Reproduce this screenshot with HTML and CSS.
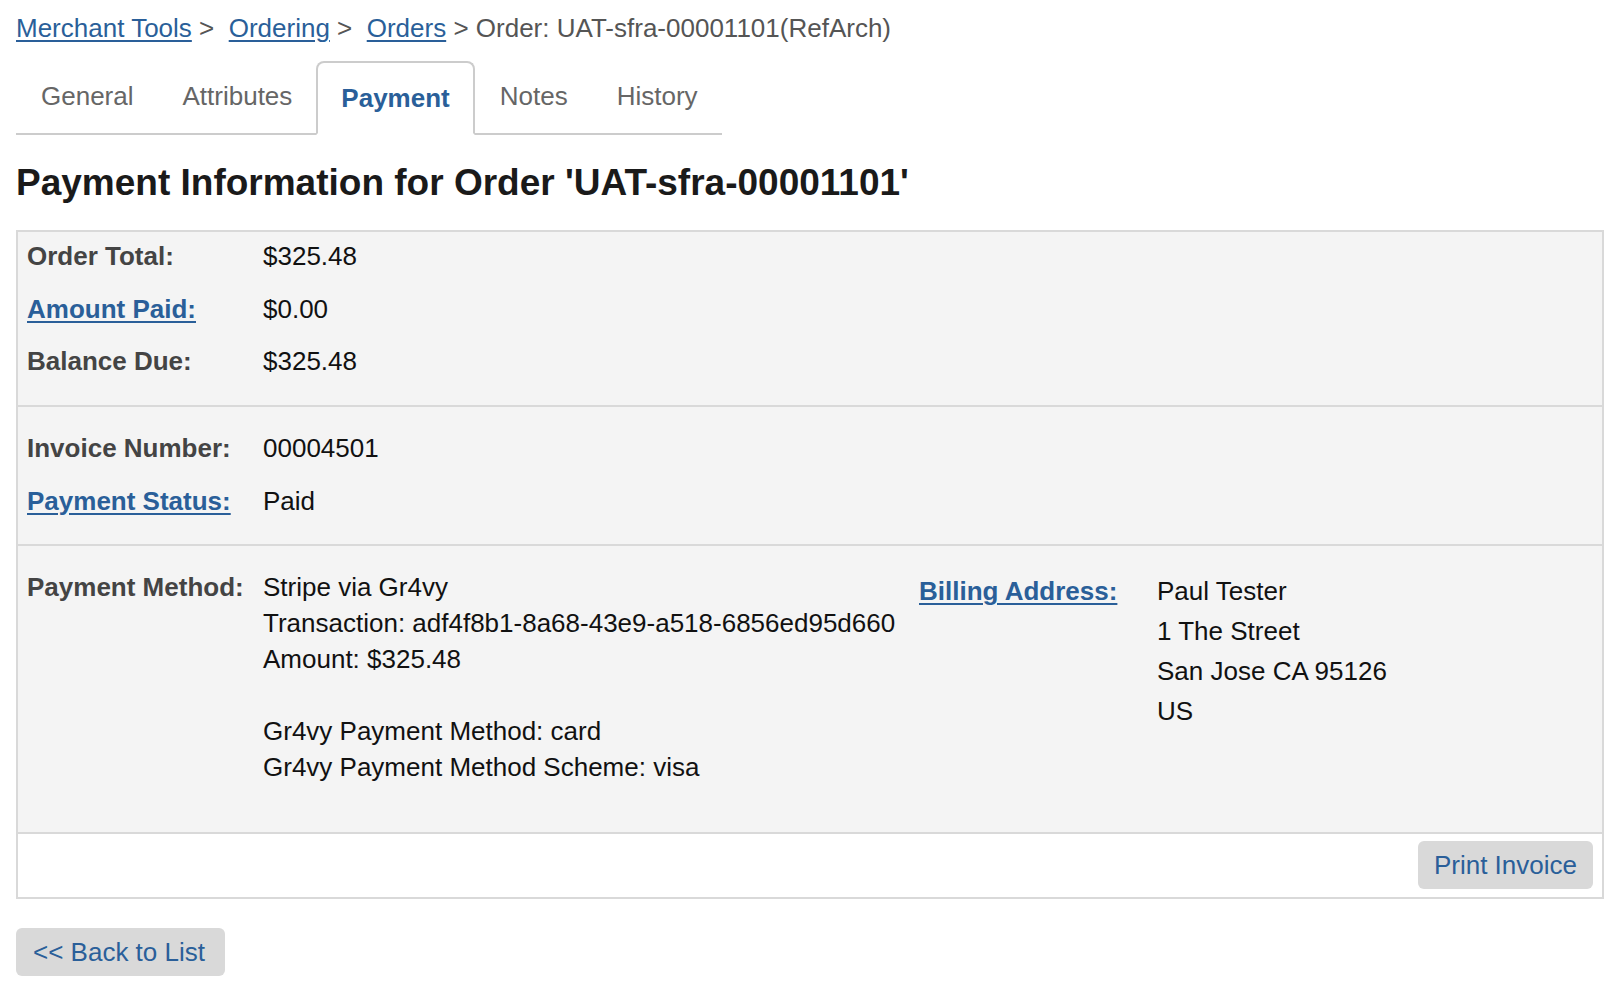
FILE: index.html
```html
<!DOCTYPE html>
<html lang="en">
<head>
<meta charset="utf-8">
<title>Payment Information</title>
<link rel="stylesheet" href="styles.css">
</head>
<body>
<div class="page">
  <nav class="crumbs"><a href="#">Merchant Tools</a> &gt;&nbsp; <a href="#">Ordering</a> &gt;&nbsp; <a href="#">Orders</a> &gt; Order: UAT-sfra-00001101(RefArch)</nav>

  <div class="tabs">
    <div class="tab">General</div>
    <div class="tab">Attributes</div>
    <div class="tab active">Payment</div>
    <div class="tab">Notes</div>
    <div class="tab">History</div>
  </div>

  <h1 class="title">Payment Information for Order 'UAT-sfra-00001101'</h1>

  <div class="panel">
    <div class="sec sec1">
      <div class="row"><span class="label">Order Total:</span><span>$325.48</span></div>
      <div class="row"><a href="#" class="label link">Amount Paid:</a><span>$0.00</span></div>
      <div class="row"><span class="label">Balance Due:</span><span>$325.48</span></div>
    </div>
    <div class="sec sec2">
      <div class="row"><span class="label">Invoice Number:</span><span>00004501</span></div>
      <div class="row"><a href="#" class="label link">Payment Status:</a><span>Paid</span></div>
    </div>
    <div class="sec sec3">
      <div class="label lines">Payment Method:</div>
      <div class="lines">
        <div>Stripe via Gr4vy</div>
        <div>Transaction: adf4f8b1-8a68-43e9-a518-6856ed95d660</div>
        <div>Amount: $325.48</div>
        <div class="blank"></div>
        <div>Gr4vy Payment Method: card</div>
        <div>Gr4vy Payment Method Scheme: visa</div>
      </div>
      <div class="addr"><a href="#" class="label link">Billing Address:</a></div>
      <div class="addr">
        <div>Paul Tester</div>
        <div>1 The Street</div>
        <div>San Jose CA 95126</div>
        <div>US</div>
      </div>
    </div>
    <div class="foot">
      <span class="btn">Print Invoice</span>
    </div>
  </div>

  <div class="back-wrap"><span class="btn back">&lt;&lt; Back to List</span></div>
</div>
</body>
</html>
```

FILE: styles.css
```css
html, body {
  margin: 0;
  padding: 0;
  background: #ffffff;
}

body {
  font-family: "Liberation Sans", Arial, Helvetica, sans-serif;
  font-size: 26px;
  color: #111111;
}

a {
  color: #2a5f99;
  text-decoration: underline;
  text-underline-offset: 3px;
  text-decoration-thickness: 2px;
}

.page {
  padding: 0 16px;
}

.crumbs {
  margin-top: 13px;
  line-height: 30px;
  color: #555555;
  white-space: nowrap;
}

.tabs {
  display: flex;
  margin-top: 18px;
  width: max-content;
}

.tab {
  padding: 20px 24px 22px 25px;
  border-bottom: 2px solid #cccccc;
  line-height: 30px;
  color: #666666;
}

.tab.active {
  border: 2px solid #cccccc;
  border-bottom: 2px solid #ffffff;
  border-radius: 8px 8px 0 0;
  color: #2a5f99;
  font-weight: bold;
  padding: 20px 23px 20px;
}

.title {
  margin: 27px 0 26px;
  font-size: 37px;
  line-height: 42px;
  font-weight: bold;
  color: #1a1a1a;
}

.panel {
  border: 2px solid #d9d9d9;
  background: #f4f4f4;
}

.sec {
  padding-left: 9px;
  padding-right: 9px;
}

.sec + .sec,
.sec + .foot {
  border-top: 2px solid #d9d9d9;
}

.sec1 {
  padding-top: 0;
  padding-bottom: 15px;
}

.sec2 {
  padding-top: 17.5px;
  padding-bottom: 15px;
}

.row {
  display: grid;
  grid-template-columns: 236px 1fr;
  line-height: 30px;
  padding: 9px 0 13.5px;
}

.label {
  font-weight: bold;
  color: #444444;
}

.label.link {
  color: #2a5f99;
  justify-self: start;
}

.sec3 {
  display: grid;
  grid-template-columns: 236px 656px 238px 1fr;
  align-items: start;
  padding-top: 23px;
  padding-bottom: 47px;
}

.lines {
  line-height: 36px;
}

.blank {
  height: 36px;
}

.addr {
  line-height: 40px;
  padding-top: 2px;
}

.foot {
  background: #ffffff;
  display: flex;
  justify-content: flex-end;
  padding: 7px 9px 8px;
}

.btn {
  display: inline-block;
  background: #d9d9d9;
  color: #2a5f99;
  border-radius: 6px;
  padding: 9px 16px;
  line-height: 30px;
}

.btn.back {
  padding: 9px 20px 9px 17px;
}

.back-wrap {
  margin-top: 29px;
}
```
